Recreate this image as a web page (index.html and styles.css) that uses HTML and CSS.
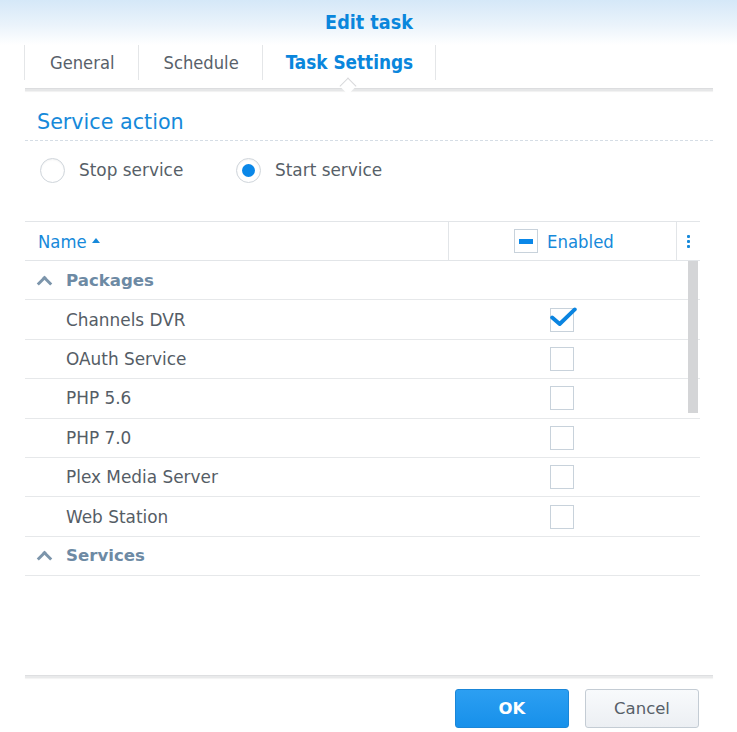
FILE: index.html
```html
<!DOCTYPE html>
<html>
<head>
<meta charset="utf-8">
<link rel="stylesheet" href="styles.css">
</head>
<body>
<div class="dialog">
  <div class="titlebar"><span class="title">Edit task</span></div>
  <div class="tabs">
    <div class="tab">General</div>
    <div class="tab">Schedule</div>
    <div class="tab active">Task Settings</div>
    <div class="tab-end"></div>
  </div>
  <div class="tabline"><span class="notch"></span></div>

  <div class="content">
    <div class="section-title">Service action</div>
    <div class="radios">
      <label class="radio"><span class="circle"></span>Stop service</label>
      <label class="radio checked"><span class="circle"></span>Start service</label>
    </div>

    <div class="grid">
      <div class="grid-head">
        <div class="col-name">Name <span class="sort"></span></div>
        <div class="col-enabled"><span class="cb indeterminate"></span>Enabled</div>
        <div class="col-more"><span class="dots"><i></i><i></i><i></i></span></div>
      </div>
      <div class="grid-body">
        <div class="scrollbar"></div>
        <div class="row group"><span class="chev"></span>Packages</div>
        <div class="row item"><span class="name">Channels DVR</span><span class="cell"><span class="cb checked"><svg viewBox="0 0 26 20" width="28" height="22"><path d="M2 10.5 L9 16.5 L23 3" fill="none" stroke="#0a84e0" stroke-width="3.6" stroke-linecap="round" stroke-linejoin="round"/></svg></span></span></div>
        <div class="row item"><span class="name">OAuth Service</span><span class="cell"><span class="cb"></span></span></div>
        <div class="row item"><span class="name">PHP 5.6</span><span class="cell"><span class="cb"></span></span></div>
        <div class="row item"><span class="name">PHP 7.0</span><span class="cell"><span class="cb"></span></span></div>
        <div class="row item"><span class="name">Plex Media Server</span><span class="cell"><span class="cb"></span></span></div>
        <div class="row item"><span class="name">Web Station</span><span class="cell"><span class="cb"></span></span></div>
        <div class="row group"><span class="chev"></span>Services</div>
      </div>
    </div>
  </div>

  <div class="footer">
    <div class="footline"></div>
    <div class="buttons">
      <button class="btn ok">OK</button>
      <button class="btn cancel">Cancel</button>
    </div>
  </div>
</div>
</body>
</html>
```

FILE: styles.css
```css
* { box-sizing: border-box; }
html, body { margin: 0; padding: 0; background: #fff; }
body { width: 737px; height: 732px; overflow: hidden; font-family: "DejaVu Sans", Verdana, sans-serif; color: #505b66; }

.dialog { display: flex; flex-direction: column; height: 732px; }

.titlebar {
  height: 45px;
  background: linear-gradient(to bottom, #d5e8f8 0%, #eaf3fb 55%, #ffffff 100%);
  display: flex; align-items: center; justify-content: center;
}
.title {
  font-family: "DejaVu Sans Condensed", "DejaVu Sans", sans-serif;
  font-weight: bold; font-size: 19.6px; color: #0a86dc;
  margin-left: 1px;
}

.tabs { display: flex; margin: 0 24px; height: 35px; }
.tab {
  font-family: "DejaVu Sans Condensed", "DejaVu Sans", sans-serif;
  font-size: 18.2px; color: #58616a;
  border-left: 1px solid #e4e6e8;
  padding: 0 23px 0 25px;
  display: flex; align-items: center;
}
.tab.active { color: #0a86dc; font-weight: bold; font-size: 18.8px; padding: 0 22px 0 23px; }
.tab-end { border-left: 1px solid #e4e6e8; }

.tabline {
  position: relative;
  margin: 8px 24px 0 25px; height: 3px;
  background: #e6e7e8;
  border-top: 1px solid #dcdddf;
  box-shadow: 0 1px 1px rgba(0,0,0,0.06);
}
.notch {
  position: absolute; left: 317px; top: -9px;
  width: 12px; height: 12px;
  background: #fff;
  border-left: 1px solid #d8d9db; border-top: 1px solid #d8d9db;
  transform: rotate(45deg);
}

.content { padding: 0 24px 0 25px; flex: 1; }
.section-title {
  font-size: 20.7px; color: #1689da;
  padding: 19px 0 0 12px; height: 50px;
  border-bottom: 1px dashed #d5dde5;
}

.radios { display: flex; padding: 16px 0 0 15px; height: 80px; }
.radio { display: flex; align-items: center; font-size: 16.9px; color: #575f68; height: 26px; }
.radio:first-child { width: 196px; }
.circle {
  width: 25px; height: 25px; border-radius: 50%;
  border: 1px solid #cfd5db; background: #fff; margin-right: 14px;
  box-shadow: inset 0 1px 2px rgba(0,0,0,0.05);
  position: relative;
}
.radio.checked .circle::after {
  content: ""; position: absolute; left: 5px; top: 5px;
  width: 13px; height: 13px; border-radius: 50%; background: #0a87e8;
}

.grid { width: 675px; border-top: 1px solid #e2e5e8; }
.grid-head { display: flex; height: 39px; border-bottom: 1px solid #e2e5e8; }
.col-name {
  font-family: "DejaVu Sans Condensed", "DejaVu Sans", sans-serif;
  width: 424px; font-size: 18.3px; color: #1689da; padding-left: 13px;
  display: flex; align-items: center;
  border-right: 1px solid #e2e5e8;
}
.sort {
  display: inline-block; width: 0; height: 0; margin-left: 5px; margin-top: -2px;
  border-left: 4px solid transparent; border-right: 4px solid transparent;
  border-bottom: 5px solid #1689da;
}
.col-enabled {
  font-family: "DejaVu Sans Condensed", "DejaVu Sans", sans-serif;
  width: 228px; font-size: 18.4px; color: #1689da;
  display: flex; align-items: center; padding-left: 65px;
  border-right: 1px solid #e2e5e8;
}
.col-more { flex: 1; display: flex; align-items: center; justify-content: center; }
.dots { display: flex; flex-direction: column; gap: 2px; margin-left: -1px; }
.dots i { display: block; width: 3px; height: 3px; background: #1689da; border-radius: 1px; }

.cb {
  display: inline-block; width: 24px; height: 24px;
  border: 1px solid #c8d2db; background: #fff; position: relative;
}
.cb.indeterminate { margin-right: 9px; }
.cb.indeterminate::after {
  content: ""; position: absolute; left: 4px; top: 9px; width: 14px; height: 5px;
  background: #0a87e8;
}
.cb.checked svg { position: absolute; left: -1px; top: -3px; }

.grid-body { position: relative; }
.scrollbar {
  position: absolute; right: 2px; top: 0; width: 10px; height: 152px;
  background: #d4d5d7;
}
.row {
  height: 39.4px; border-bottom: 1px solid #e6e8ea;
  display: flex; align-items: center;
}
.group { font-weight: bold; color: #6d8aa4; font-size: 16.6px; padding-left: 12px; }
.chev {
  width: 11px; height: 11px; margin: 6px 16px 0 2px;
  border-left: 3px solid #7c95ab; border-top: 3px solid #7c95ab;
  transform: rotate(45deg);
}
.item { font-size: 16.9px; color: #555d66; }
.item .name { width: 525px; padding-left: 41px; }
.item .cell { display: flex; align-items: center; }

.footer { height: 57px; }
.footline {
  margin: 0 24px 0 25px; height: 3px;
  background: #e9eaeb; border-top: 1px solid #dedfe1;
  box-shadow: 0 1px 1px rgba(0,0,0,0.05);
}
.buttons { display: flex; justify-content: flex-end; gap: 16px; padding: 11px 38px 0 0; }
.btn {
  width: 114px; height: 39px; border-radius: 3px;
  font-family: "DejaVu Sans", sans-serif; font-size: 16.5px;
}
.ok {
  background: linear-gradient(to bottom, #2c9ff2, #1790ea);
  border: 1px solid #1a86d8; color: #fff; font-weight: bold;
}
.cancel {
  background: linear-gradient(to bottom, #f8fafc, #eceff3);
  border: 1px solid #c4ccd4; color: #575f68;
}
```
